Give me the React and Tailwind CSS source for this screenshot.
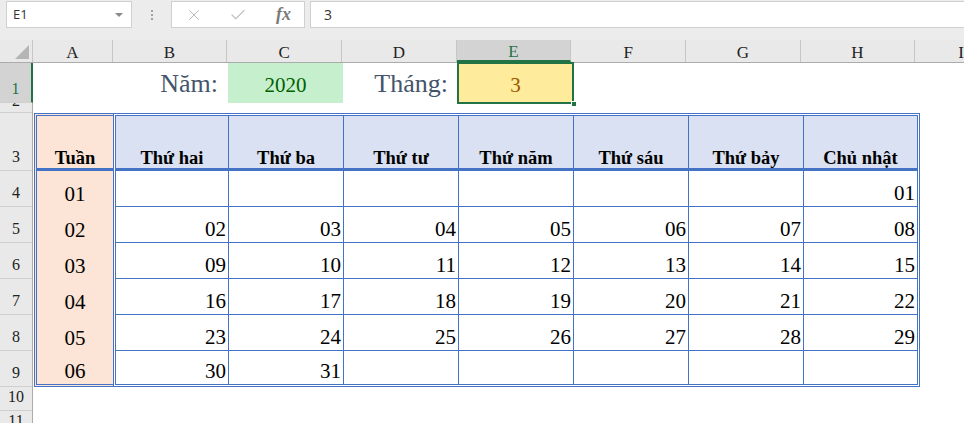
import { X, Check } from 'lucide-react';

const colHeads = [
    { l: 'A', w: 'w-[80px]' },
    { l: 'B', w: 'w-[115px]' },
    { l: 'C', w: 'w-[115px]' },
    { l: 'D', w: 'w-[115px]' },
    { l: 'E', w: 'w-[115px]', sel: true },
    { l: 'F', w: 'w-[115px]' },
    { l: 'G', w: 'w-[115px]' },
    { l: 'H', w: 'w-[115px]' },
];

const rowHeads = [
    { n: '1', h: 'h-[40px] pb-[5px]', sel: true },
    { n: '2', h: 'h-[10px] pb-[3px]' },
    { n: '3', h: 'h-[58px] pb-[5px]' },
    { n: '4', h: 'h-[36px] pb-[5px]' },
    { n: '5', h: 'h-[36px] pb-[5px]' },
    { n: '6', h: 'h-[36px] pb-[5px]' },
    { n: '7', h: 'h-[36px] pb-[5px]' },
    { n: '8', h: 'h-[36px] pb-[5px]' },
    { n: '9', h: 'h-[36px] pb-[5px]' },
    { n: '10', h: 'h-[24px] pb-[5px]' },
    { n: '11', h: 'h-[24px] pb-[5px]' },
];

const days = ['Thứ hai', 'Thứ ba', 'Thứ tư', 'Thứ năm', 'Thứ sáu', 'Thứ bảy', 'Chủ nhật'];

const weeks = [
    ['', '', '', '', '', '', '01'],
    ['02', '03', '04', '05', '06', '07', '08'],
    ['09', '10', '11', '12', '13', '14', '15'],
    ['16', '17', '18', '19', '20', '21', '22'],
    ['23', '24', '25', '26', '27', '28', '29'],
    ['30', '31', '', '', '', '', ''],
];

const cellW = ['w-[113px]', 'w-[115px]', 'w-[115px]', 'w-[115px]', 'w-[115px]', 'w-[115px]', 'flex-1'];

const App = () => {
    return (
        <div className="w-[964px] h-[423px] overflow-hidden bg-white font-['Liberation_Serif',serif] text-black">
            {/* Formula bar */}
            <div className="h-[30px] bg-[#ececec] flex items-start pt-[1px] pl-[6px] font-['Open_Sans',sans-serif]">
                <div className="w-[126px] h-[27px] bg-white border border-[#d0d0d0] flex items-center justify-between pl-[6px] pr-[8px]">
                    <span className="text-[13px] text-[#333]">E1</span>
                    <span className="w-0 h-0 border-l-[4px] border-r-[4px] border-t-[4px] border-l-transparent border-r-transparent border-t-[#8a8a8a]"></span>
                </div>
                <div className="w-[39px] h-[27px] flex flex-col items-center justify-center gap-[2px]">
                    <span className="w-[2px] h-[2px] bg-[#a0a0a0]"></span>
                    <span className="w-[2px] h-[2px] bg-[#a0a0a0]"></span>
                    <span className="w-[2px] h-[2px] bg-[#a0a0a0]"></span>
                </div>
                <div className="w-[134px] h-[27px] bg-white border border-[#d0d0d0] flex items-center pl-[13px]">
                    <X size={18} strokeWidth={1.3} className="text-[#b9b9b9]" />
                    <Check size={18} strokeWidth={1.6} className="text-[#c2c2c2] ml-[26px]" />
                    <span className="font-['Liberation_Serif',serif] italic font-bold text-[18px] text-[#7a7a7a] ml-[29px]">fx</span>
                </div>
                <div className="flex-1 h-[27px] ml-[5px] bg-white border border-[#d0d0d0] border-r-0 flex items-center pl-[13px]">
                    <span className="text-[14px] text-[#333]">3</span>
                </div>
            </div>
            <div className="h-[10px] bg-[#ececec]"></div>

            {/* Column headers */}
            <div className="h-[23px] flex bg-[#e9e9e9] border-b border-[#ababab]">
                <div className="w-[33px] border-r border-[#c6c6c6] flex items-end justify-end p-[3px]">
                    <svg width="14" height="14" viewBox="0 0 14 14">
                        <polygon points="14,0 14,14 0,14" fill="#b5b5b5" />
                    </svg>
                </div>
                {colHeads.map((c) => (
                    <div
                        key={c.l}
                        className={`${c.w} border-r border-[#c6c6c6] flex items-end justify-center text-[17px] leading-none ${c.sel ? 'bg-[#d3d3d3] text-[#217346] border-b-2 border-b-[#217346] pb-0' : 'text-[#222] pb-[1px]'}`}
                    >
                        {c.l}
                    </div>
                ))}
                <div className="flex-1 flex items-end pl-[43px] pb-[1px] text-[17px] leading-none text-[#222]">I</div>
            </div>

            <div className="flex">
                {/* Row headers */}
                <div className="w-[33px] flex flex-col bg-[#e9e9e9] border-r border-[#ababab]">
                    {rowHeads.map((r) => (
                        <div
                            key={r.n}
                            className={`${r.h} shrink-0 overflow-hidden border-b border-[#d0d0d0] flex items-end justify-center text-[16px] leading-none ${r.sel ? 'bg-[#d3d3d3] text-[#217346] border-r-2 border-r-[#217346] -mr-px' : 'text-[#222]'}`}
                        >
                            {r.n}
                        </div>
                    ))}
                </div>

                {/* Sheet */}
                <div className="flex-1 flex flex-col">
                    {/* Row 1 */}
                    <div className="h-[40px] flex shrink-0">
                        <div className="w-[80px]"></div>
                        <div className="w-[115px] flex items-end justify-end pr-[10px] pb-[6px] text-[26px] leading-none text-[#44546a]">Năm:</div>
                        <div className="w-[115px] bg-[#c6efce] flex items-end justify-center pb-[7px] text-[21px] leading-none text-[#006100]">2020</div>
                        <div className="w-[115px] flex items-end justify-end pr-[10px] pb-[6px] text-[26px] leading-none text-[#44546a]">Tháng:</div>
                        <div className="w-[115px] relative bg-[#ffeb9c] flex items-end justify-center pb-[7px] text-[21px] leading-none text-[#9c5700]">
                            3
                            <div className="absolute -inset-x-[1px] -top-[1px] -bottom-[1px] border-2 border-[#217346]"></div>
                            <div className="absolute -right-[4px] -bottom-[4px] w-[6px] h-[6px] bg-[#217346] border border-white"></div>
                        </div>
                    </div>
                    {/* Row 2 */}
                    <div className="h-[10px] shrink-0"></div>

                    {/* Calendar table */}
                    <div className="h-[274px] flex shrink-0">
                        <div className="ml-[1px] w-[79px] bg-[#fce4d6] border-[3px] border-r-0 border-double border-[#4472c4] flex flex-col">
                            <div className="h-[55px] shrink-0 border-b-[3px] border-solid border-[#4472c4] flex items-end justify-center pb-[1px] font-bold text-[18.5px] leading-none">Tuần</div>
                            {['01', '02', '03', '04', '05', '06'].map((w, i) => (
                                <div
                                    key={w}
                                    className={`${i === 5 ? 'h-[33px]' : 'h-[36px]'} shrink-0 flex items-end justify-center pb-[2px] text-[21px] leading-none`}
                                >
                                    {w}
                                </div>
                            ))}
                        </div>
                        <div className="w-[807px] border-[3px] border-double border-[#4472c4] flex flex-col">
                            <div className="h-[55px] shrink-0 flex bg-[#d9e1f2] border-b-[3px] border-solid border-[#4472c4]">
                                {days.map((d, i) => (
                                    <div
                                        key={d}
                                        className={`${cellW[i]} ${i < 6 ? 'border-r border-[#4472c4]' : ''} flex items-end justify-center pb-[1px] font-bold text-[18.5px] leading-none`}
                                    >
                                        {d}
                                    </div>
                                ))}
                            </div>
                            {weeks.map((wk, ri) => (
                                <div
                                    key={ri}
                                    className={`${ri === 5 ? 'h-[33px]' : 'h-[36px] border-b border-[#4472c4]'} shrink-0 flex`}
                                >
                                    {wk.map((v, ci) => (
                                        <div
                                            key={ci}
                                            className={`${cellW[ci]} ${ci < 6 ? 'border-r border-[#4472c4]' : ''} flex items-end justify-end pr-[2px] pb-[2px] text-[21px] leading-none`}
                                        >
                                            {v}
                                        </div>
                                    ))}
                                </div>
                            ))}
                        </div>
                    </div>
                </div>
            </div>
        </div>
    );
};

export default App;
